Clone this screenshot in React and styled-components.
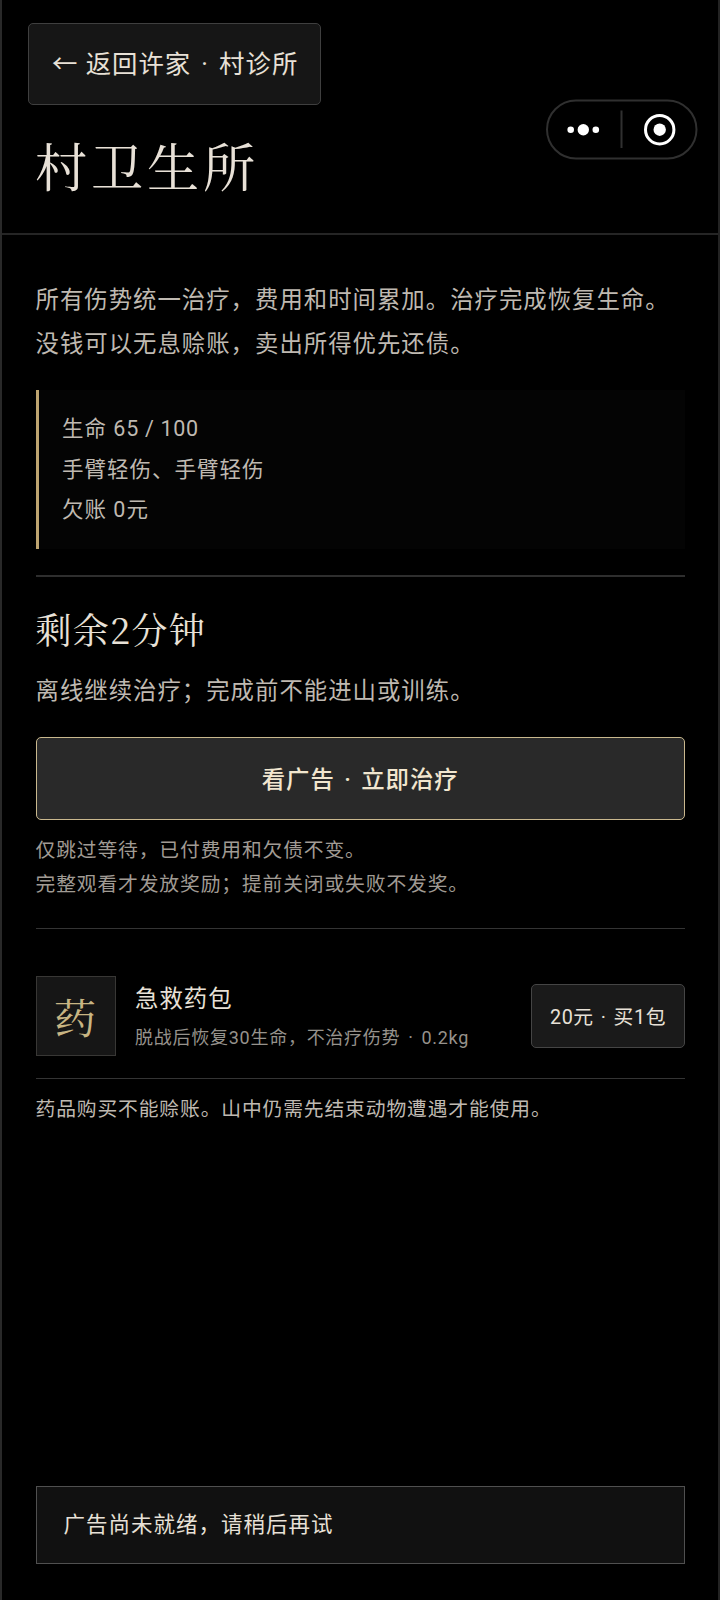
import React from 'react';
import styled, { createGlobalStyle } from 'styled-components';

const SANS = 'Roboto, "Noto Sans CJK SC", sans-serif';
const SERIF = '"Noto Serif CJK SC", "Noto Serif SC", "Source Han Serif SC", "Noto Sans CJK SC", serif';

const GlobalStyle = createGlobalStyle`
  * {
    box-sizing: border-box;
  }

  body {
    margin: 0;
    background: #000;
  }

  p, h1, h2 {
    margin: 0;
    font-weight: 400;
  }

  button {
    margin: 0;
    padding: 0;
    font-family: inherit;
    letter-spacing: inherit;
  }
`;

const Page = styled.div`
  position: relative;
  display: flex;
  flex-direction: column;
  width: 720px;
  height: 1600px;
  border-left: 2px solid #292929;
  border-right: 2px solid #232323;
  background: #000;
  color: #e8e1d7;
  font-family: ${SANS};
  letter-spacing: 1px;
  white-space: nowrap;
`;

const Header = styled.header`
  height: 235px;
  padding: 23px 26px 0;
  border-bottom: 2px solid #252525;
`;

const BackButton = styled.button`
  display: block;
  width: 293px;
  height: 82px;
  padding: 0 0 4px 23px;
  border: 1px solid #3f3f3f;
  border-radius: 5px;
  background: #161616;
  color: #e8e1d7;
  font-size: 25.4px;
  text-align: left;
`;

const Dot = styled.span`
  margin: 0 ${props => props.$gap}px;
`;

const Title = styled.h1`
  padding: 20px 0 0 7px;
  font-family: ${SERIF};
  font-size: 52.2px;
  font-weight: 400;
  line-height: 80px;
  letter-spacing: 3.8px;
`;

const Capsule = styled.svg`
  position: absolute;
  top: 98px;
  left: 542.5px;
`;

const Main = styled.main`
  flex: 1;
  display: flex;
  flex-direction: column;
  padding: 44px 33px 36px 33.5px;
`;

const Text = styled.p`
  color: #bfb9b1;
  font-size: 23.4px;
  line-height: 43.8px;
`;

const StatusBox = styled.div`
  margin-top: 23px;
  height: 159px;
  padding: 19.5px 0 0 23.5px;
  border-left: 3px solid #bea470;
  background: #040404;
  color: #bfb9b1;
  font-size: 21.5px;
  line-height: 40.5px;
`;

const Numbers = styled.span`
  letter-spacing: 0.7px;
`;

const Treatment = styled.section`
  height: 354px;
  margin-top: 26px;
  padding-top: 25px;
  border-top: 2px solid #2e2e2e;
  border-bottom: 1px solid #343434;
`;

const Remaining = styled.h2`
  margin-bottom: 14.5px;
  font-family: ${SERIF};
  font-size: 36px;
  font-weight: 400;
  line-height: 54px;
  letter-spacing: 1.3px;
`;

const AdButton = styled.button`
  display: block;
  width: 100%;
  height: 83px;
  margin: 23.5px 0 14px;
  padding-bottom: 2px;
  border: 1px solid #c9b88e;
  border-radius: 5px;
  background: #292929;
  color: #f1e6cf;
  font-size: 23.4px;
  font-weight: 500;
`;

const Note = styled.p`
  color: ${props => (props.$bright ? '#bfb9b1' : '#a09b94')};
  font-size: 19.8px;
  line-height: 34px;
  letter-spacing: 0.86px;
`;

const Item = styled.div`
  display: flex;
  align-items: center;
  height: 150px;
  margin-bottom: 14px;
  padding-top: 26px;
  border-bottom: 1px solid #343434;
`;

const ItemIcon = styled.div`
  width: 80px;
  height: 80px;
  margin-right: 19.5px;
  padding-right: 1px;
  border: 1px solid #383735;
  background: #161616;
  color: #c8b583;
  font-family: ${SERIF};
  font-size: 42px;
  line-height: 79px;
  letter-spacing: 0;
  text-align: center;
`;

const ItemInfo = styled.div`
  flex: 1;
  padding-top: 2px;
`;

const ItemName = styled.div`
  font-size: 23.4px;
  line-height: 41px;
`;

const ItemDetail = styled.div`
  color: #96928c;
  font-size: 18px;
  line-height: 36px;
  letter-spacing: 0.74px;
`;

const BuyButton = styled.button`
  width: 154px;
  height: 64px;
  padding-bottom: 2px;
  border: 1px solid #454545;
  border-radius: 5px;
  background: #1a1a1a;
  color: #e8e1d7;
  font-size: 19.8px;
  letter-spacing: 0.6px;
`;

const Toast = styled.div`
  height: 78px;
  margin-top: auto;
  padding-left: 27px;
  border: 1px solid #505050;
  background: #111;
  font-size: 21.5px;
  line-height: 76px;
`;

const CapsuleMenu = () => (
  <Capsule width="154" height="64" viewBox="0 0 154 64">
    <rect x="2" y="2.5" width="149.5" height="58" rx="29" fill="#000" stroke="#303030" strokeWidth="2" />
    <g fill="#fff">
      <circle cx="25.7" cy="31.7" r="3.3" />
      <circle cx="38.3" cy="31.7" r="5.7" />
      <circle cx="50.8" cy="31.7" r="3.3" />
      <circle cx="114.7" cy="31.7" r="6.2" />
    </g>
    <path d="M76.5 12.5v37.5" stroke="#303030" strokeWidth="2" />
    <circle cx="114.7" cy="31.7" r="14.2" fill="none" stroke="#fff" strokeWidth="3" />
  </Capsule>
);

const App = () => (
  <Page lang="zh-CN">
    <GlobalStyle />
    <Header>
      <BackButton>← 返回许家 <Dot $gap={2.8}>·</Dot> 村诊所</BackButton>
      <Title>村卫生所</Title>
    </Header>
    <CapsuleMenu />
    <Main>
      <Text>所有伤势统一治疗，费用和时间累加。治疗完成恢复生命。</Text>
      <Text>没钱可以无息赊账，卖出所得优先还债。</Text>
      <StatusBox>
        <div>生命 <Numbers>65 / 100</Numbers></div>
        <div>手臂轻伤、手臂轻伤</div>
        <div>欠账 0元</div>
      </StatusBox>
      <Treatment>
        <Remaining>剩余2分钟</Remaining>
        <Text>离线继续治疗；完成前不能进山或训练。</Text>
        <AdButton>看广告 <Dot $gap={2.5}>·</Dot> 立即治疗</AdButton>
        <Note>仅跳过等待，已付费用和欠债不变。</Note>
        <Note>完整观看才发放奖励；提前关闭或失败不发奖。</Note>
      </Treatment>
      <Item>
        <ItemIcon>药</ItemIcon>
        <ItemInfo>
          <ItemName>急救药包</ItemName>
          <ItemDetail>脱战后恢复30生命，不治疗伤势 <Dot $gap={2.6}>·</Dot> 0.2kg</ItemDetail>
        </ItemInfo>
        <BuyButton>20元 <Dot $gap={1.5}>·</Dot> 买1包</BuyButton>
      </Item>
      <Note $bright>药品购买不能赊账。山中仍需先结束动物遭遇才能使用。</Note>
      <Toast>广告尚未就绪，请稍后再试</Toast>
    </Main>
  </Page>
);

export default App;
